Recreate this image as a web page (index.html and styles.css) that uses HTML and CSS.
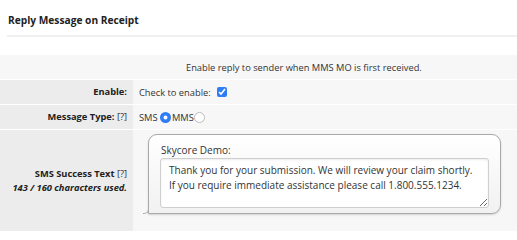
FILE: index.html
```html
<!DOCTYPE html>
<html>
<head>
<meta charset="utf-8">
<link rel="stylesheet" href="styles.css">
</head>
<body>
<div class="header"><h3 class="title">Reply Message on Receipt</h3></div>
<table class="form">
  <tr class="desc-row">
    <td class="label-cell blank"></td>
    <td class="desc">Enable reply to sender when MMS MO is first received.</td>
  </tr>
  <tr>
    <td class="label-cell"><b>Enable:</b></td>
    <td class="value">Check to enable: <input type="checkbox" class="check" checked></td>
  </tr>
  <tr>
    <td class="label-cell"><b>Message Type:</b> [?]</td>
    <td class="value">SMS <input type="radio" name="t" class="radio" checked>MMS<input type="radio" name="t" class="radio"></td>
  </tr>
  <tr class="sms-row">
    <td class="label-cell"><b>SMS Success Text</b> [?]<br><b><i>143 / 160 characters used.</i></b></td>
    <td class="value bubble-cell">
      <div class="bubble">
        <div class="sender">Skycore Demo:</div>
        <textarea class="msg">Thank you for your submission. We will review your claim shortly.
If you require immediate assistance please call 1.800.555.1234.</textarea>
      </div>
    </td>
  </tr>
</table>
</body>
</html>
```
FILE: styles.css
```css
html, body {
  margin: 0;
  padding: 0;
  background: #fff;
  font-family: "Open Sans", "DejaVu Sans", sans-serif;
  font-size: 9.3px;
  color: #333;
}
.header {
  margin: 0 0 0 7px;
  border-bottom: 2px solid #f0f0f0;
  height: 35px;
}
.title {
  margin: 0;
  padding: 12px 0 0 1px;
  font-size: 10.2px;
  font-weight: 700;
  line-height: 16px;
  color: #222;
}
.form {
  margin-top: 17px;
  width: 517px;
  border-collapse: collapse;
}
.form td {
  border-top: 1px solid #fff;
  padding: 0;
  height: 24px;
  vertical-align: middle;
}
.label-cell {
  width: 127px;
  padding-right: 6px !important;
  background: #ececec;
  text-align: right;
  line-height: 14px;
  white-space: nowrap;
}
.label-cell b { color: #222; }
.label-cell i { font-size: 9.3px; }
.desc-row td { background: #f7f7f7; }
.desc-row .blank { background: #f7f7f7; }
.desc {
  padding-left: 53px !important;
}
.value {
  background: #f7f7f7;
  padding-left: 6px !important;
}
.check {
  width: 10px;
  height: 10px;
  margin: 0 0 0 4px;
  vertical-align: -1px;
  accent-color: #2f7df6;
}
.radio {
  appearance: none;
  -webkit-appearance: none;
  box-sizing: border-box;
  width: 11px;
  height: 11px;
  margin: 0 1px 0 0;
  vertical-align: -2px;
  border: 1px solid #bdbdbd;
  border-radius: 50%;
  background: #fff;
}
.radio:checked {
  border: none;
  box-shadow: inset 0 0 0 3.5px #2f7df6;
}
.sms-row td { height: 97px; vertical-align: middle; }
.bubble-cell { vertical-align: top !important; padding-top: 4px !important; }
.bubble {
  position: relative;
  box-sizing: border-box;
  width: 353px;
  margin-left: 9px;
  padding: 9px 11px 5px 11px;
  border: 1px solid #a9a9a9;
  border-radius: 9px 9px 9px 0;
  background: linear-gradient(#fff, #f1f1f1);
  box-shadow: 0 1px 2px rgba(0,0,0,0.15);
}
.bubble::after {
  content: "";
  position: absolute;
  left: -6px;
  bottom: -1px;
  width: 5px;
  height: 5px;
  border-right: 1px solid #a9a9a9;
  border-bottom: 1px solid #a9a9a9;
  border-bottom-right-radius: 5px;
}
.sender {
  font-size: 10px;
  line-height: 12px;
  margin-bottom: 2px;
  padding-left: 1px;
}
.msg {
  display: block;
  box-sizing: border-box;
  width: 329px;
  height: 50px;
  margin: 0;
  padding: 4px 8px;
  border: 1px solid #cfcfcf;
  border-radius: 3px;
  background: #fff;
  box-shadow: inset 0 1px 2px rgba(0,0,0,0.08);
  font-family: "Open Sans", "DejaVu Sans", sans-serif;
  font-size: 10px;
  line-height: 15px;
  color: #333;
  resize: vertical;
  overflow: hidden;
}
```
